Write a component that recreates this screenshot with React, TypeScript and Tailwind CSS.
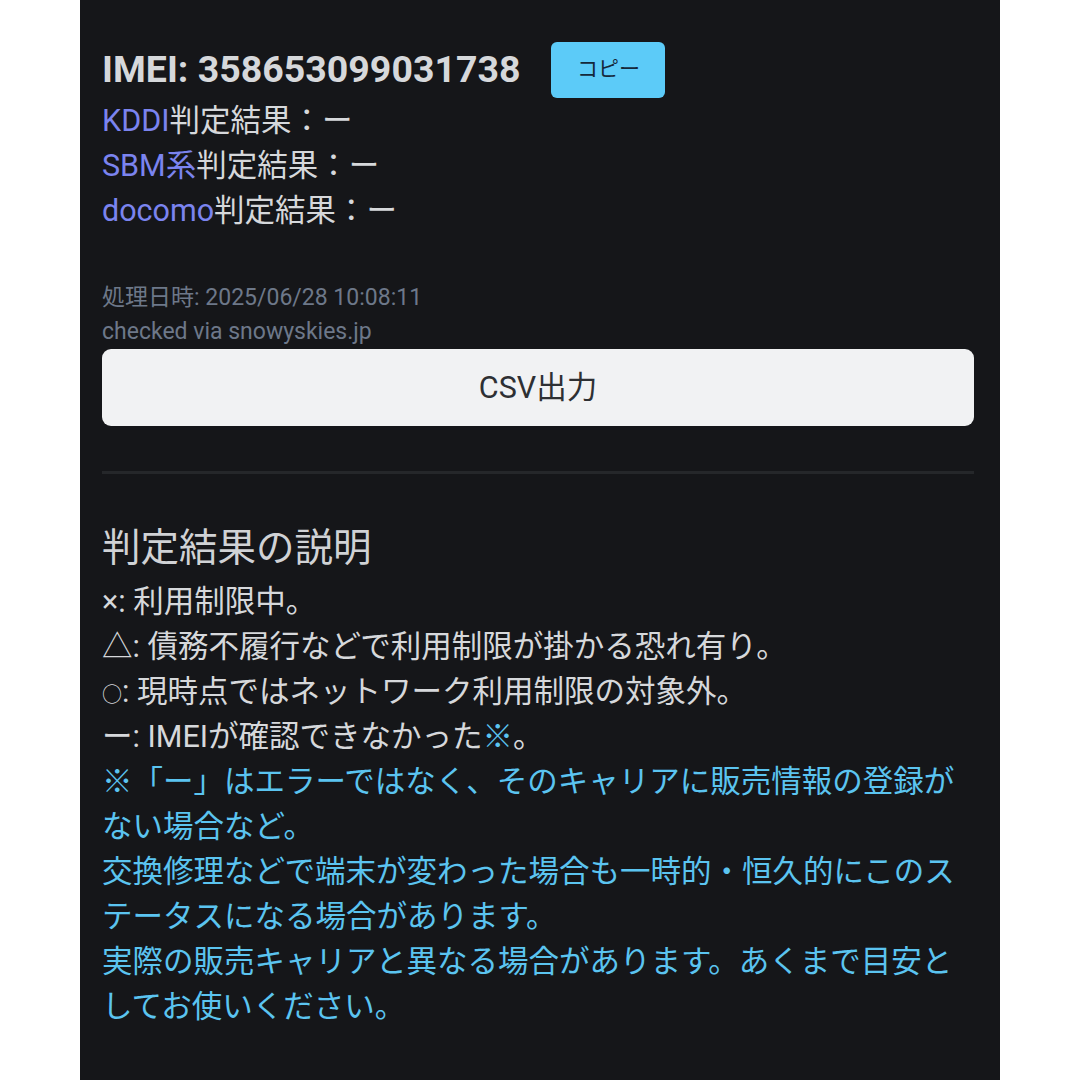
import React from 'react';

const font = { fontFamily: 'Roboto, "Noto Sans CJK JP", sans-serif' };

const carriers = ['KDDI', 'SBM系', 'docomo'];

const legend = [
  { mark: '×', text: '利用制限中。' },
  { mark: '△', text: '債務不履行などで利用制限が掛かる恐れ有り。' },
];

const App: React.FC = () => {
  return (
    <div className="min-h-screen w-full bg-white" style={font}>
      <div className="mx-auto min-h-[1080px] w-[920px] bg-[#151619] pl-[22px] pr-[26px] pt-[42px]">
        {/* IMEI header */}
        <div className="flex items-center">
          <h2 className="text-[37.5px] font-bold leading-none text-[#d6d8db]">IMEI: 358653099031738</h2>
          <button className="ml-[31px] h-[56px] w-[114px] rounded-[6px] bg-[#5ccbf8] text-[21px] text-[#15283a]">
            コピー
          </button>
        </div>

        <div className="text-[30.5px] leading-[45px] text-[#d6d8db]">
          {carriers.map((c) => (
            <div key={c}>
              <span className="text-[#7b84ef]">{c}</span>判定結果：ー
            </div>
          ))}
        </div>

        <div className="mt-[48px] text-[23px] leading-[34px] text-[#6d7889]">
          <div>処理日時: 2025/06/28 10:08:11</div>
          <div>checked via snowyskies.jp</div>
        </div>

        <button className="h-[77px] w-full rounded-[9px] bg-[#f1f2f3] text-[30.5px] text-[#2e3033]">CSV出力</button>

        <div className="mt-[45px] h-[3px] w-full bg-[#25272a]" />

        {/* Explanation */}
        <h3 className="mt-[51px] text-[38.5px] leading-[45px] text-[#d0d2d5]">判定結果の説明</h3>
        <div className="mt-[9px] text-[30.5px] leading-[45px] text-[#d6d8db]">
          {legend.map((l) => (
            <div key={l.mark}>
              {l.mark}: {l.text}
            </div>
          ))}
          <div>
            <span className="text-[20px] leading-none">○</span>: 現時点ではネットワーク利用制限の対象外。
          </div>
          <div>
            ー: IMEIが確認できなかった<span className="text-[#5bc4f0]">※</span>。
          </div>
          <div className="text-[#5bc4f0]">
            <div>※「ー」はエラーではなく、そのキャリアに販売情報の登録がない場合など。</div>
            <div>交換修理などで端末が変わった場合も一時的・恒久的にこのステータスになる場合があります。</div>
            <div>実際の販売キャリアと異なる場合があります。あくまで目安としてお使いください。</div>
          </div>
        </div>
      </div>
    </div>
  );
};

export default App;
